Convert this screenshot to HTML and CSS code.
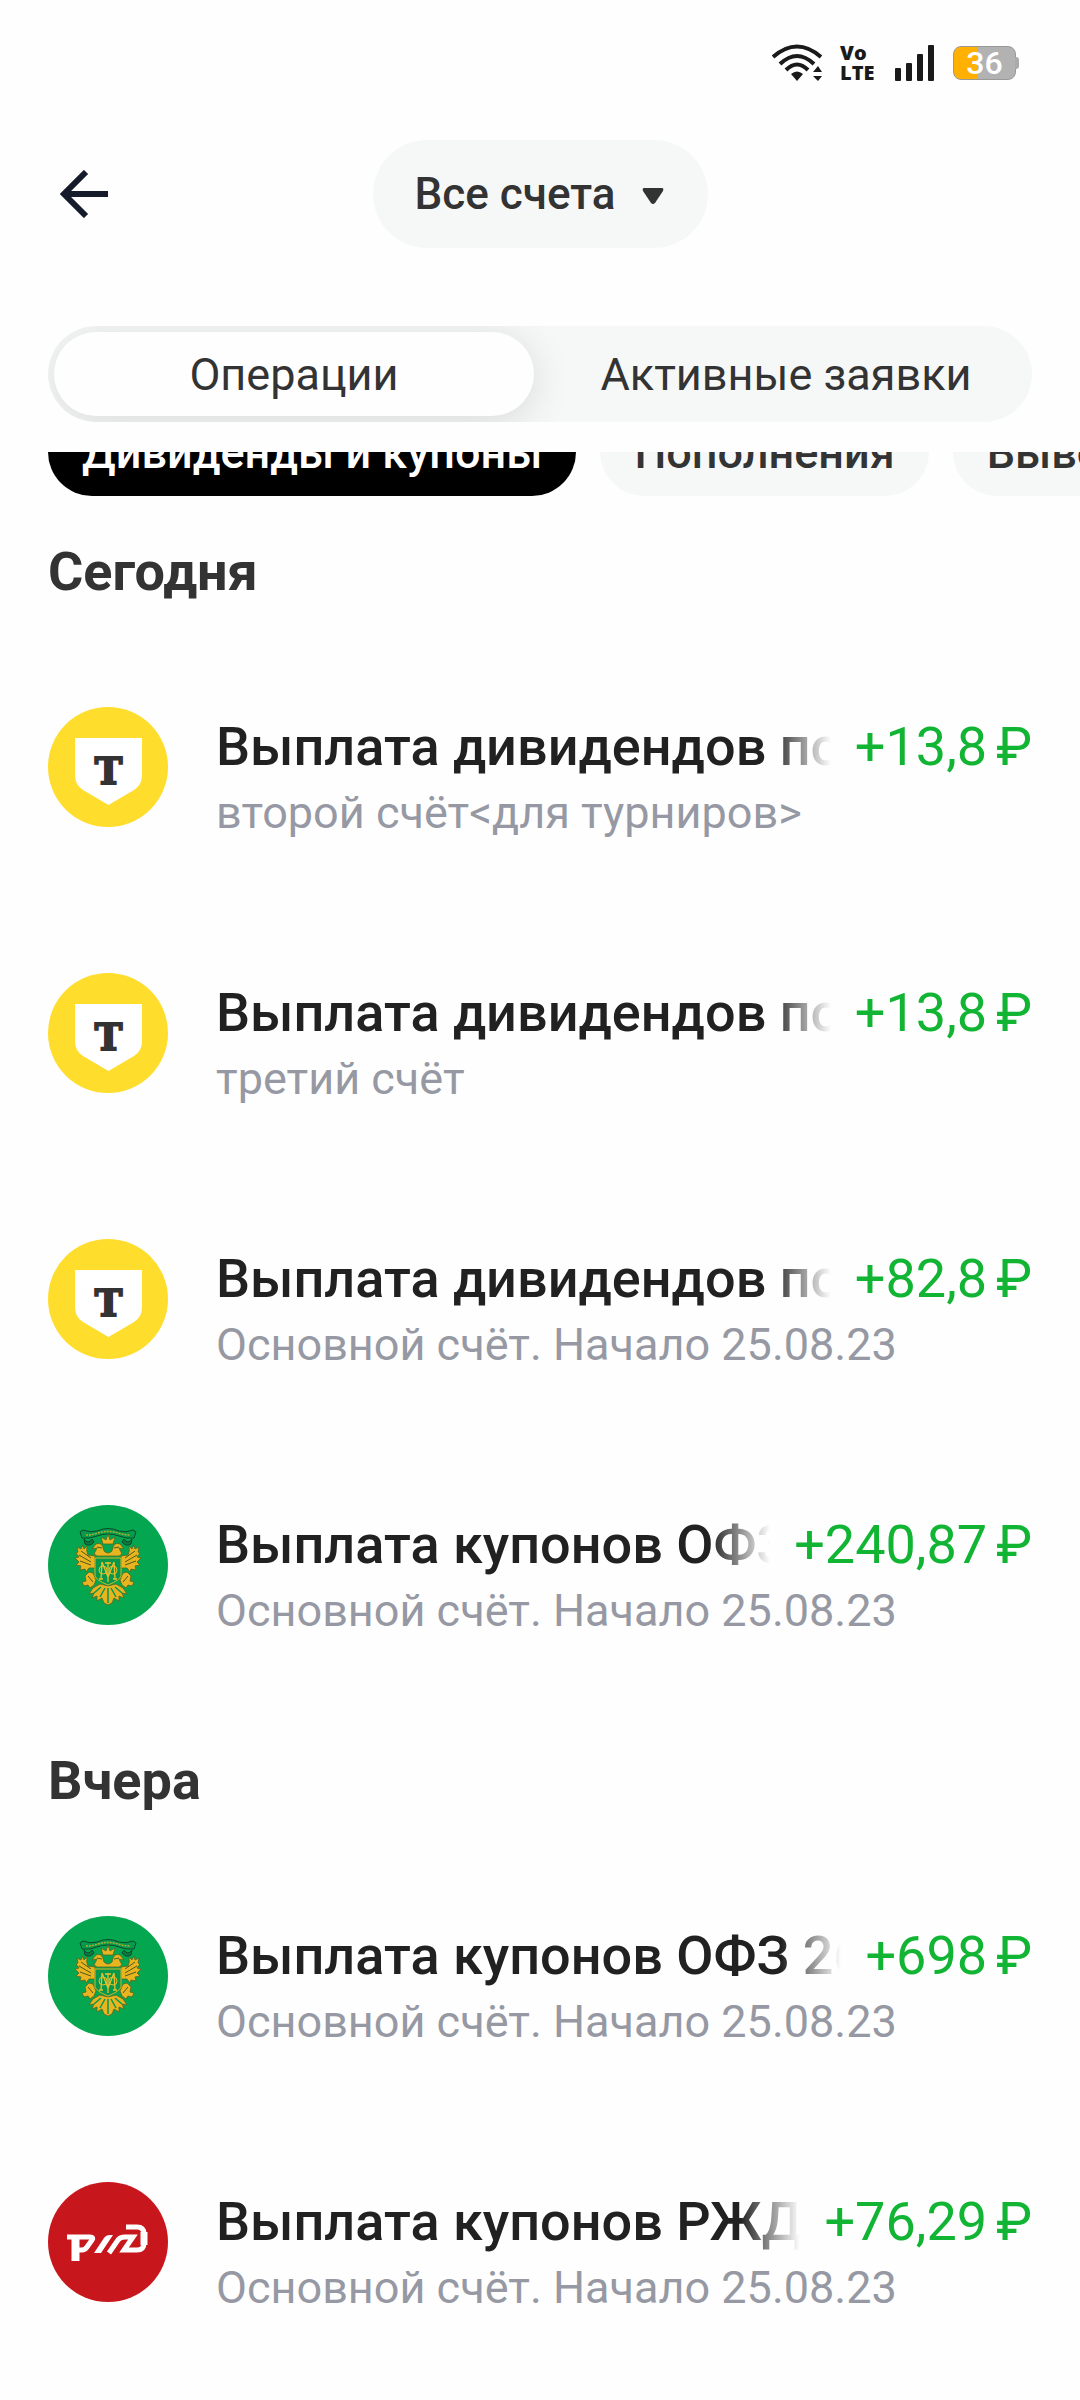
FILE: index.html
```
<!DOCTYPE html>
<html lang="ru">
  <head>
    <meta charset="UTF-8" />
    <meta name="viewport" content="width=device-width, initial-scale=1.0" />
    <title>Операции</title>
    <link rel="stylesheet" href="styles.css" />
  </head>

  <body>
    <!-- shared logos -->
    <svg class="sprites" aria-hidden="true">
      <symbol id="logo-t" viewBox="0 0 120 120">
        <circle cx="60" cy="60" r="60" fill="#ffdd2d" />
        <path d="M27 31H94V68Q94 78 86 83L60.500 98L35 83Q27 78 27 68Z" fill="#fff" />
        <text x="60.500" y="77" class="logo-letter">T</text>
      </symbol>

      <symbol id="logo-minfin" viewBox="0 0 120 120">
        <circle cx="60" cy="60" r="60" fill="#05a650" />
        <!-- ribbon -->
        <path d="M32 27L35 25Q42 28 49 26Q60 21 71 26Q78 28 85 25L88 27L86 33Q78 34 71 31Q60 27 49 31Q42 34 34 33Z" fill="#079a4c" stroke="#0a4a2a" stroke-width="1" />
        <path d="M38 30Q44 30 50 28Q60 25 70 28Q76 30 82 30" fill="none" stroke="#b3ad2b" stroke-width="1.500" stroke-dasharray="2 1" />
        <path d="M36 34Q40 40 44 34L46 37Q42 42 37 39ZM84 34Q80 40 76 34L74 37Q78 42 83 39Z" fill="#0c7a40" stroke="#0a4a2a" />
        <g fill="#e8b521" stroke="#5a6420" stroke-width=".8">
          <!-- wings -->
          <path d="M47 51L40 50Q38 46 39 41L36 44L34 40L33 44L29 42L30 47L28 48L31 52L27 53L31 57L28 60L33 61L32 65L37 64L38 67L41 63L47 63Z" />
          <path d="M73 51L80 50Q82 46 81 41L84 44L86 40L87 44L91 42L90 47L92 48L89 52L93 53L89 57L92 60L87 61L88 65L83 64L82 67L79 63L73 63Z" />
          <!-- heads and neck -->
          <path d="M44 44L48 39Q53 37 55 42L56 46Q60 50 64 46L65 42Q67 37 72 39L76 44L71 43L74 49L71 51H49L46 49L49 43Z" />
          <!-- crown -->
          <path d="M55 39L53 32L58 35L60 29L62 35L67 32L65 39Z" />
          <!-- tail -->
          <path d="M52 79L45 83L41 89L46 88L44 93L49 91L49 96L54 93L56 98L60 100L64 98L66 93L71 96L71 91L76 93L74 88L79 89L75 83L68 79L60 81Z" />
          <!-- legs -->
          <path d="M41 67L37 71L38 76L34 77L36 81L40 80L42 83L46 80L48 75L45 68Z" />
          <path d="M79 67L83 71L82 76L86 77L84 81L80 80L78 83L74 80L72 75L75 68Z" />
        </g>
        <g fill="none" stroke="#4d5a1c" stroke-width="1">
          <path d="M33 46L43 53M31 50L43 57M32 56L43 60" />
          <path d="M87 46L77 53M89 50L77 57M88 56L77 60" />
          <path d="M60 83V98M57 83L52 92M63 83L68 92M53 82L46 88M67 82L74 88" stroke="#08984b" stroke-width="1.500" />
          <path d="M49 42L54 43M71 42L66 43M40 71L45 77M80 71L75 77" />
        </g>
        <!-- shield and monogram -->
        <path d="M47 53H73V71Q72 75 60 80Q48 75 47 71Z" fill="#08984b" stroke="#d5b326" stroke-width="1" />
        <path d="M53 74L54 57M67 74L66 57M54 57L60 72L66 57M60 57V77M57 58H63M51 74H55M65 74H69" fill="none" stroke="#e8c12a" stroke-width="1.300" />
        <ellipse cx="55" cy="65" rx="4" ry="4" fill="none" stroke="#e8c12a" />
        <ellipse cx="65" cy="65" rx="4" ry="4" fill="none" stroke="#e8c12a" />
      </symbol>

      <symbol id="logo-rzd" viewBox="0 0 120 120">
        <circle cx="60" cy="60" r="60" fill="#c8161d" />
        <g fill="none" stroke="#fff" stroke-width="5">
          <path d="M19 55H42Q46 55 44 58L39 65Q37 68 34 68H30" />
          <path d="M27.500 53V79" stroke-width="8" />
          <path d="M78 45H89Q96 45 96 52V61Q96 68 89 68H76L85 55H77Q72 55 70 58L61 71" />
          <path d="M96 50V63" stroke-width="7" />
        </g>
        <path d="M46 71L56 56Q58 53 62 53H65L53 71Z" fill="#fff" />
      </symbol>
    </svg>

    <div class="status-bar">
      <svg class="wifi" viewBox="0 0 50 38" aria-label="Wi-Fi">
        <g fill="none" stroke="#1a1a1a" stroke-width="4">
          <path d="M1 13Q25 -8 49 13" />
          <path d="M8 20Q25 4 42 20" />
          <path d="M14 26Q25 15 36 26" />
        </g>
        <path d="M19 30Q25 25 31 30L25 37Z" />
        <path d="M41 28L46 22L50 28ZM41 32H50L46 37Z" />
      </svg>
      <span class="volte">Vo<br />LTE</span>
      <svg class="signal" viewBox="0 0 40 38" aria-label="Сеть">
        <rect x="0" y="24" width="6" height="13" rx="1" />
        <rect x="11" y="19" width="6" height="18" rx="1" />
        <rect x="22" y="10" width="6" height="27" rx="1" />
        <rect x="33" y="1" width="6" height="36" rx="1" />
      </svg>
      <div class="battery">36</div>
    </div>

    <header class="top-bar">
      <button class="back" aria-label="Назад">
        <svg viewBox="0 0 48 48">
          <path d="M48 24H4M26 2L4 24L26 46" fill="none" stroke="#151b2b" stroke-width="6" />
        </svg>
      </button>
      <div class="account">
        <select aria-label="Счёт">
          <option>Все счета</option>
        </select>
        <svg class="caret" viewBox="0 0 22 18">
          <path d="M2 1H20Q22 1 21 4L13 16Q11 18 9 16L1 4Q0 1 2 1Z" fill="#333" />
        </svg>
      </div>
    </header>

    <div class="tabs" role="tablist">
      <button class="tab active" role="tab" aria-selected="true">Операции</button>
      <button class="tab" role="tab" aria-selected="false">Активные заявки</button>
    </div>

    <div class="chips">
      <button class="chip selected">Дивиденды и купоны</button>
      <button class="chip">Пополнения</button>
      <button class="chip">Выводы</button>
    </div>

    <main>
      <h2>Сегодня</h2>
      <div class="row">
        <svg class="logo"><use href="#logo-t" /></svg>
        <div class="info">
          <div class="line">
            <span class="title">Выплата дивидендов по</span>
            <span class="amount">+13,8<span class="currency">₽</span></span>
          </div>
          <p>второй счёт&lt;для турниров&gt;</p>
        </div>
      </div>
      <div class="row">
        <svg class="logo"><use href="#logo-t" /></svg>
        <div class="info">
          <div class="line">
            <span class="title">Выплата дивидендов по</span>
            <span class="amount">+13,8<span class="currency">₽</span></span>
          </div>
          <p>третий счёт</p>
        </div>
      </div>
      <div class="row">
        <svg class="logo"><use href="#logo-t" /></svg>
        <div class="info">
          <div class="line">
            <span class="title">Выплата дивидендов по</span>
            <span class="amount">+82,8<span class="currency">₽</span></span>
          </div>
          <p>Основной счёт. Начало 25.08.23</p>
        </div>
      </div>
      <div class="row">
        <svg class="logo"><use href="#logo-minfin" /></svg>
        <div class="info">
          <div class="line">
            <span class="title">Выплата купонов ОФЗ</span>
            <span class="amount">+240,87<span class="currency">₽</span></span>
          </div>
          <p>Основной счёт. Начало 25.08.23</p>
        </div>
      </div>

      <h2>Вчера</h2>
      <div class="row">
        <svg class="logo"><use href="#logo-minfin" /></svg>
        <div class="info">
          <div class="line">
            <span class="title">Выплата купонов ОФЗ 26</span>
            <span class="amount">+698<span class="currency">₽</span></span>
          </div>
          <p>Основной счёт. Начало 25.08.23</p>
        </div>
      </div>
      <div class="row">
        <svg class="logo"><use href="#logo-rzd" /></svg>
        <div class="info">
          <div class="line">
            <span class="title">Выплата купонов РЖД</span>
            <span class="amount">+76,29<span class="currency">₽</span></span>
          </div>
          <p>Основной счёт. Начало 25.08.23</p>
        </div>
      </div>
    </main>
  </body>
</html>
```
FILE: styles.css
```
* {
  box-sizing: border-box;
  font-family: Roboto, "Noto Sans", sans-serif;
}

body {
  margin: 0;
  background-color: #fefefe;
  color: #333;
}

button,
select {
  border: none;
  padding: 0;
  background: none;
  color: #333;
  font-size: 45px;
  cursor: pointer;
}

.sprites {
  display: none;
}

.logo-letter {
  font-family: "DejaVu Serif", serif;
  font-size: 37px;
  font-weight: bold;
  text-anchor: middle;
  fill: #333;
  stroke: #333;
  stroke-width: 2px;
}

/* status bar */
.status-bar {
  display: flex;
  justify-content: flex-end;
  align-items: center;
  height: 126px;
  padding-right: 64px;
}

.wifi {
  width: 50px;
  height: 38px;
  margin-right: 18px;
  fill: #1a1a1a;
}

.volte {
  width: 36px;
  margin-right: 19px;
  color: #1a1a1a;
  font-family: "Open Sans", sans-serif;
  font-size: 20px;
  font-weight: 800;
  line-height: 20px;
}

.signal {
  width: 40px;
  height: 38px;
  margin-right: 18px;
  fill: #1a1a1a;
}

.battery {
  position: relative;
  width: 63px;
  height: 34px;
  border: 1px solid #999;
  border-radius: 8px;
  background: linear-gradient(to right, #ffb000 38%, #b2b2b2 38%);
  color: white;
  font-size: 32px;
  font-weight: 500;
  line-height: 33px;
  text-align: center;
}

.battery::after {
  content: "";
  position: absolute;
  top: 10px;
  right: -4px;
  width: 4px;
  height: 12px;
  border-radius: 0 3px 3px 0;
  background-color: #aaa;
}

/* header */
.top-bar {
  display: grid;
  grid-template-columns: 1fr auto 1fr;
  align-items: center;
  height: 136px;
  padding: 0 60px;
}

.back {
  width: 48px;
  height: 48px;
}

.back svg {
  display: block;
}

.account {
  position: relative;
}

.account select {
  appearance: none;
  height: 108px;
  padding: 0 92px 0 42px;
  border-radius: 54px;
  background-color: #f6f8f8;
  font-size: 44px;
  font-weight: 500;
}

.caret {
  position: absolute;
  top: 47px;
  right: 44px;
  width: 22px;
  height: 18px;
  pointer-events: none;
}

/* tabs */
.tabs {
  display: flex;
  gap: 12px;
  margin: 64px 48px 0;
  padding: 6px;
  border-radius: 48px;
  background-color: #f6f8f8;
  overflow: hidden;
}

.tab {
  flex: 1;
  height: 84px;
  border-radius: 42px;
}

.tab.active {
  background-color: #fefefe;
  box-shadow: 0 6px 40px rgba(0, 0, 0, 0.12);
}

/* filters, scrolled partly under the tabs */
.chips {
  display: flex;
  align-items: flex-end;
  gap: 24px;
  height: 44px;
  margin-top: 30px;
  padding-left: 48px;
  overflow: hidden;
}

.chip {
  flex: none;
  height: 88px;
  padding: 0 34px;
  border-radius: 44px;
  background-color: #f6f8f8;
  font-weight: 500;
}

.chip.selected {
  background-color: black;
  color: white;
}

/* operations */
main {
  padding: 0 48px;
}

h2 {
  margin: 0;
  padding: 44px 0 37px;
  font-size: 54px;
  font-weight: 700;
  line-height: 64px;
}

.row {
  display: flex;
  gap: 48px;
  padding: 66px 0 61px;
}

.logo {
  flex: none;
  width: 120px;
  height: 120px;
}

.info {
  flex: 1;
  min-width: 0;
  padding-top: 7px;
}

.line {
  display: flex;
  gap: 24px;
  font-size: 54px;
  line-height: 66px;
  white-space: nowrap;
}

.title {
  flex: 1;
  min-width: 0;
  overflow: hidden;
  color: #212121;
  font-weight: 500;
  mask-image: linear-gradient(to right, black calc(100% - 60px), transparent);
}

.amount {
  color: #12b434;
}

.currency {
  margin-left: 9px;
}

.info p {
  margin: 0;
  color: #9699a3;
  font-size: 45px;
  line-height: 66px;
}
```
